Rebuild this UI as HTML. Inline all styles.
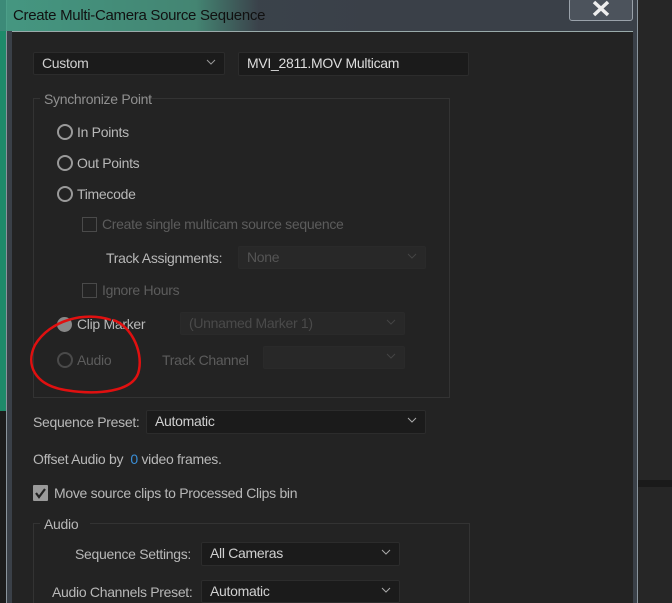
<!DOCTYPE html>
<html><head><style>
html,body{margin:0;width:672px;height:603px;overflow:hidden}
body{background:#262626;font-family:"Liberation Sans",sans-serif;position:relative}
.a{position:absolute}
.t{position:absolute;font-size:14px;color:#b8b8b8;white-space:nowrap;letter-spacing:-0.3px}
.dim{color:#5c5c5c}
.dd{position:absolute;background:#1b1b1b;border:1px solid #2c2c2c;border-radius:2px;box-sizing:border-box;font-size:14px;color:#d0d0d0;padding-left:8px;line-height:20px;letter-spacing:-0.3px}
.dd.dis{background:#282828;border-color:#2a2a2a;color:#555}
.dd svg{position:absolute;right:8px;top:6px}
.r{position:absolute;width:12px;height:12px;border:2px solid #9a9a9a;border-radius:50%}
.cb{position:absolute;width:13px;height:13px;border:1px solid #4a4a4a}
.grp{position:absolute;border:1px solid #333}
</style></head><body>
<div class="a" style="left:0;top:0;width:672px;height:31px;background:linear-gradient(90deg,#3c8a78 0%,#2e7a66 30%,#2a3a40 40%,#3a4048 60%,#4a5058 85%,#262626 95%)"></div>
<div class="a" style="left:638px;top:0;width:34px;height:31px;background:#262626"></div>
<div class="a" style="left:0;top:31px;width:6px;height:380px;background:#1e8a6a"></div>
<div class="a" style="left:0;top:411px;width:6px;height:192px;background:#1c1c1c"></div>
<div class="a" style="left:6px;top:0;width:632px;height:603px;border-left:1px solid #8a949c;border-right:1px solid #8a949c;box-sizing:border-box;background:#3a4048"></div>
<div class="a" style="left:6px;top:0;width:632px;height:31px;background:linear-gradient(90deg,rgba(70,160,135,.9) 0%,rgba(70,150,125,.8) 30%,rgba(60,70,80,.3) 40%,rgba(0,0,0,0) 60%)"></div>
<div class="t" style="left:13px;top:7px;font-size:15px;color:#111">Create Multi-Camera Source Sequence</div>
<div class="a" style="left:569px;top:-2px;width:62px;height:21px;border:1px solid #9aa2aa;border-radius:3px;background:#4c535c;overflow:hidden"><svg width="62" height="21"><path d="M24 3l14 13M38 3L24 16" stroke="#eee" stroke-width="3.5"/></svg></div>
<div class="a" style="left:12px;top:31px;width:621px;height:572px;background:#232323;border-top:1px solid #9aa"></div>
<div class="a" style="left:638px;top:480px;width:34px;height:7px;background:#1a1a1a"></div>

<div class="dd" style="left:33px;top:52px;width:192px;height:23px">Custom<svg width="10" height="6"><path d="M1 1l4 4 4-4" stroke="#999" fill="none"/></svg></div>
<div class="dd" style="left:238px;top:52px;width:231px;height:24px;color:#ddd">MVI_2811.MOV Multicam</div>

<div class="grp" style="left:33px;top:98px;width:415px;height:298px"></div>
<div class="a" style="left:40px;top:90px;width:103px;height:16px;background:#232323"></div>
<div class="t dim" style="left:44px;top:91px;color:#909090">Synchronize Point</div>

<div class="r" style="left:57px;top:124px"></div><div class="t" style="left:77px;top:124px">In Points</div>
<div class="r" style="left:57px;top:155px"></div><div class="t" style="left:77px;top:155px">Out Points</div>
<div class="r" style="left:57px;top:186px"></div><div class="t" style="left:77px;top:186px">Timecode</div>
<div class="cb" style="left:82px;top:217px"></div><div class="t dim" style="left:102px;top:216px">Create single multicam source sequence</div>
<div class="t" style="left:106px;top:250px">Track Assignments:</div>
<div class="dd dis" style="left:238px;top:246px;width:188px;height:23px">None<svg width="10" height="6"><path d="M1 1l4 4 4-4" stroke="#444" fill="none"/></svg></div>
<div class="cb" style="left:82px;top:283px"></div><div class="t dim" style="left:102px;top:282px">Ignore Hours</div>
<div class="a" style="left:57px;top:317px;width:15px;height:15px;border-radius:50%;background:#888"></div><div class="t" style="left:77px;top:316px">Clip Marker</div>
<div class="dd dis" style="left:180px;top:312px;width:225px;height:23px;color:#4a4a4a">(Unnamed Marker 1)<svg width="10" height="6"><path d="M1 1l4 4 4-4" stroke="#444" fill="none"/></svg></div>
<div class="r" style="left:57px;top:352px;border-color:#4a4a4a"></div><div class="t dim" style="left:77px;top:352px">Audio</div>
<div class="t dim" style="left:162px;top:352px">Track Channel</div>
<div class="dd dis" style="left:263px;top:346px;width:142px;height:23px"><svg width="10" height="6"><path d="M1 1l4 4 4-4" stroke="#444" fill="none"/></svg></div>
<svg class="a" style="left:25px;top:315px" width="120" height="82"><path d="M86 5C60 -4 25 5 10 30C0 50 10 70 40 75C70 80 110 78 114 55C118 35 105 10 88 5" stroke="#e01010" stroke-width="2.5" fill="none"/></svg>

<div class="t" style="left:33px;top:414px">Sequence Preset:</div>
<div class="dd" style="left:146px;top:410px;width:280px;height:24px">Automatic<svg width="10" height="6"><path d="M1 1l4 4 4-4" stroke="#aaa" fill="none"/></svg></div>
<div class="t" style="left:33px;top:451px">Offset Audio by &nbsp;<span style="color:#3a8fd8">0</span> video frames.</div>
<div class="a" style="left:33px;top:485px;width:15px;height:16px;background:#9a9a9a;border-radius:1px"></div>
<svg class="a" style="left:33px;top:485px" width="15" height="16"><path d="M3 8l3 4 6-8" stroke="#222" stroke-width="2.2" fill="none"/></svg>
<div class="t" style="left:54px;top:485px">Move source clips to Processed Clips bin</div>

<div class="grp" style="left:33px;top:523px;width:435px;height:85px"></div>
<div class="a" style="left:40px;top:516px;width:50px;height:16px;background:#232323"></div>
<div class="t" style="left:44px;top:516px">Audio</div>
<div class="t" style="left:75px;top:546px">Sequence Settings:</div>
<div class="dd" style="left:201px;top:542px;width:199px;height:24px">All Cameras<svg width="10" height="6"><path d="M1 1l4 4 4-4" stroke="#aaa" fill="none"/></svg></div>
<div class="t" style="left:52px;top:584px">Audio Channels Preset:</div>
<div class="dd" style="left:201px;top:580px;width:199px;height:23px">Automatic<svg width="10" height="6"><path d="M1 1l4 4 4-4" stroke="#aaa" fill="none"/></svg></div>
</body></html>
